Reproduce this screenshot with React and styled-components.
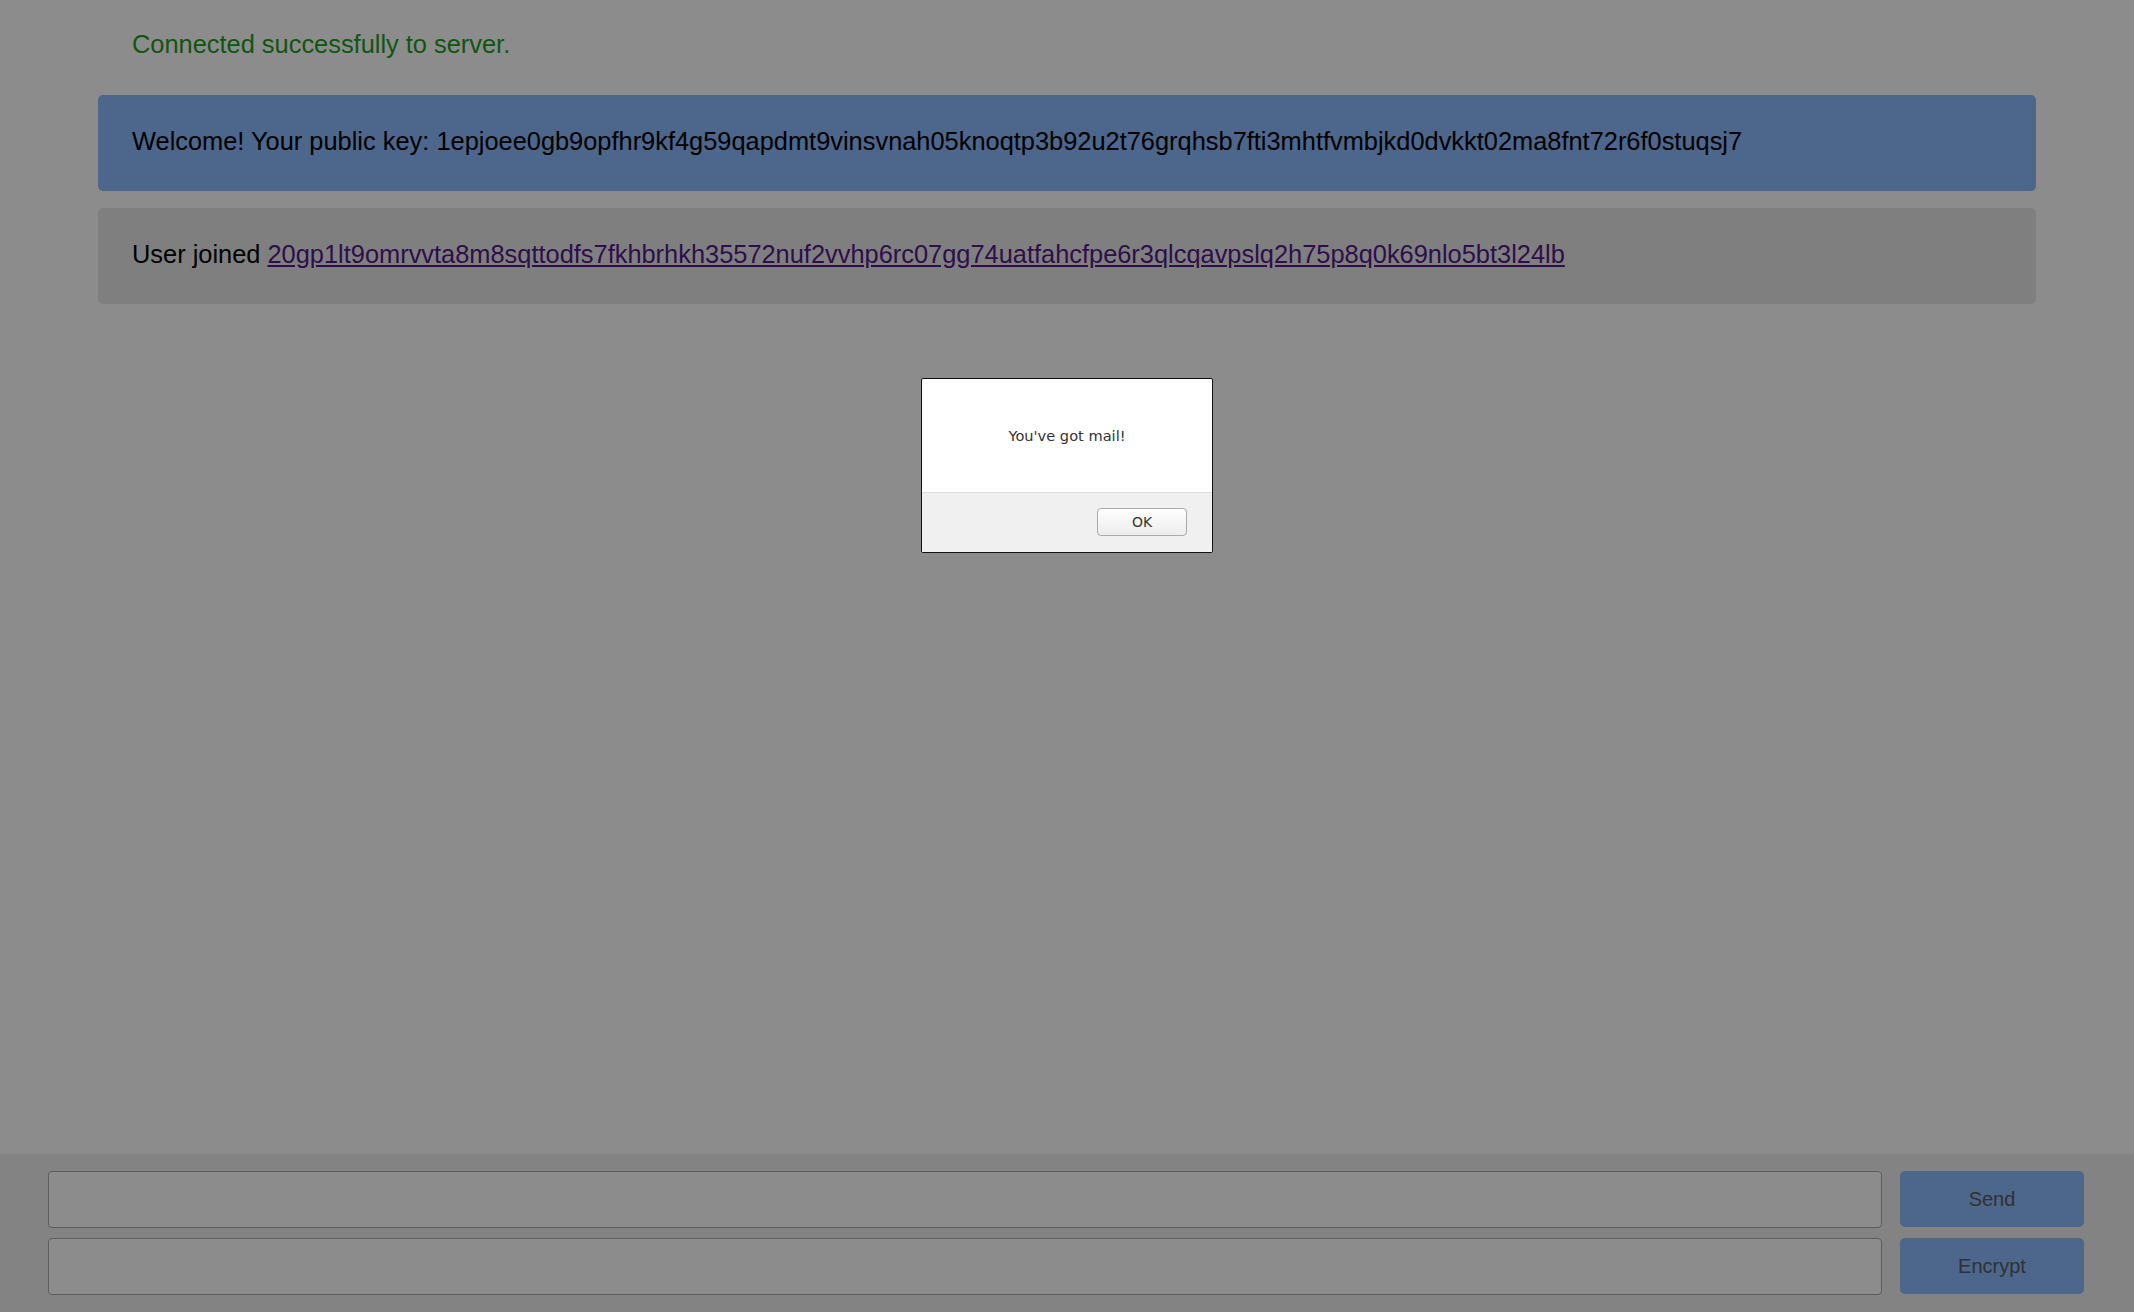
import styled, { createGlobalStyle } from "styled-components";

const GlobalStyle = createGlobalStyle`
  html,
  body {
    margin: 0;
    padding: 0;
    height: 100%;
    background: #fff;
    font-family: "Liberation Sans", Arial, sans-serif;
  }

  #root {
    height: 100%;
  }
`;

const Page = styled.div`
  height: 100%;
  display: flex;
  flex-direction: column;
`;

const MessageList = styled.div`
  flex: 1;
  display: flex;
  flex-direction: column;
  gap: 17px;
  padding: 0 98px;
`;

const Message = styled.div`
  padding: ${props => (props.status ? "30px 34px 20px" : "32px 34px 36px")};
  border-radius: 5px;
  font-size: 25.4px;
  line-height: 28px;
  white-space: nowrap;
  color: ${props => (props.status ? "#1f9c1f" : "#000")};
  background: ${props =>
    props.kind === "info"
      ? "#8abaff"
      : props.kind === "event"
      ? "#e7e7e7"
      : "transparent"};
`;

const UserLink = styled.a`
  color: #551a8b;
  text-decoration: underline;
`;

const Composer = styled.form`
  display: grid;
  grid-template-columns: 1fr 184px;
  grid-auto-rows: 57px;
  row-gap: 10px;
  column-gap: 18px;
  padding: 17px 50px 17px 48px;
  background: #eee;
`;

const Field = styled.input`
  box-sizing: border-box;
  height: 57px;
  border: 1px solid #aaa;
  border-radius: 4px;
  background: #fff;
  font-family: inherit;
  font-size: 20px;
  padding: 0 12px;
`;

const ActionButton = styled.button`
  height: 56px;
  border: none;
  border-radius: 5px;
  background: #8abaff;
  color: #5a5a5a;
  font-family: inherit;
  font-size: 20px;
  cursor: pointer;
`;

const Backdrop = styled.div`
  position: fixed;
  inset: 0;
  background: rgba(0, 0, 0, 0.451);
  display: flex;
  justify-content: center;
  align-items: flex-start;
  padding-top: 378px;
`;

const Dialog = styled.div`
  width: 290px;
  border: 1px solid #111;
  border-radius: 2px;
  background: #fff;
  font-family: "DejaVu Sans", sans-serif;
  font-size: 14.6px;
  color: #333;
  overflow: hidden;
`;

const DialogBody = styled.div`
  height: 113px;
  display: flex;
  align-items: center;
  justify-content: center;
`;

const DialogFooter = styled.div`
  height: 60px;
  border-top: 1px solid #dcdcdc;
  background: #f0f0f0;
  display: flex;
  align-items: center;
  justify-content: flex-end;
  padding-right: 25px;
  padding-bottom: 2px;
  box-sizing: border-box;
`;

const OkButton = styled.button`
  width: 90px;
  height: 28px;
  border: 1px solid #aaa;
  border-radius: 4px;
  background: linear-gradient(#fff, #ececec);
  font-family: inherit;
  font-size: 14px;
  color: #333;
`;

const publicKey =
  "1epjoee0gb9opfhr9kf4g59qapdmt9vinsvnah05knoqtp3b92u2t76grqhsb7fti3mhtfvmbjkd0dvkkt02ma8fnt72r6f0stuqsj7";
const joinedKey =
  "20gp1lt9omrvvta8m8sqttodfs7fkhbrhkh35572nuf2vvhp6rc07gg74uatfahcfpe6r3qlcqavpslq2h75p8q0k69nlo5bt3l24lb";

export default function App() {
  return (
    <>
      <GlobalStyle />
      <Page>
        <MessageList>
          <Message status>Connected successfully to server.</Message>
          <Message kind="info">Welcome! Your public key: {publicKey}</Message>
          <Message kind="event">
            User joined <UserLink href="#">{joinedKey}</UserLink>
          </Message>
        </MessageList>
        <Composer onSubmit={e => e.preventDefault()}>
          <Field />
          <ActionButton type="submit">Send</ActionButton>
          <Field />
          <ActionButton type="button">Encrypt</ActionButton>
        </Composer>
      </Page>
      <Backdrop>
        <Dialog>
          <DialogBody>You've got mail!</DialogBody>
          <DialogFooter>
            <OkButton>OK</OkButton>
          </DialogFooter>
        </Dialog>
      </Backdrop>
    </>
  );
}
